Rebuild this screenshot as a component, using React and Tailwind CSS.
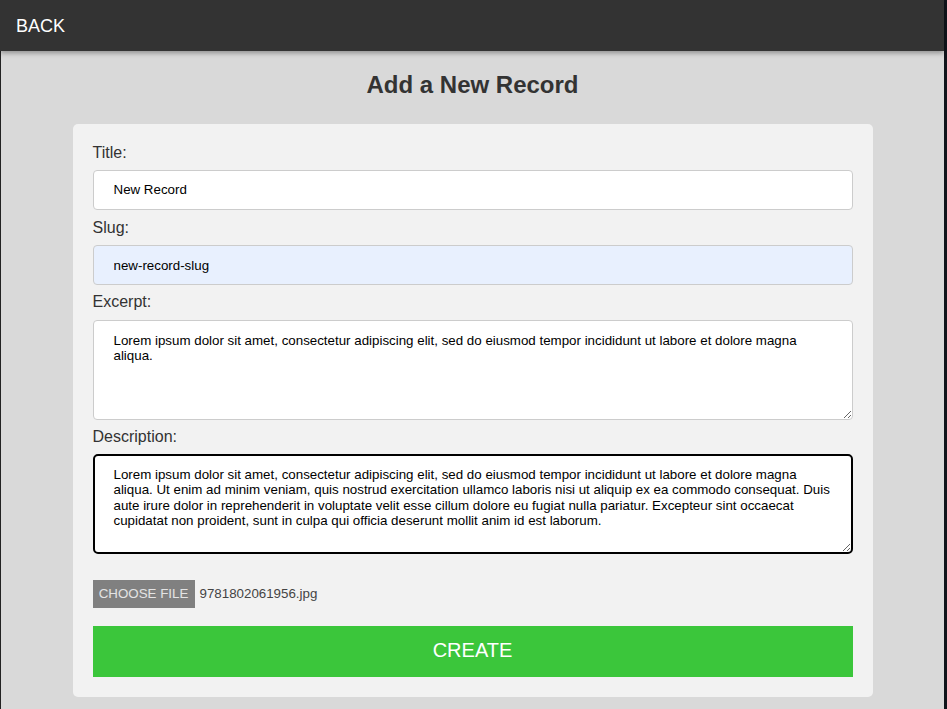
import React, { useState } from 'react';

const EXCERPT =
  'Lorem ipsum dolor sit amet, consectetur adipiscing elit, sed do eiusmod tempor incididunt ut labore et dolore magna aliqua.';

const DESCRIPTION =
  'Lorem ipsum dolor sit amet, consectetur adipiscing elit, sed do eiusmod tempor incididunt ut labore et dolore magna aliqua. Ut enim ad minim veniam, quis nostrud exercitation ullamco laboris nisi ut aliquip ex ea commodo consequat. Duis aute irure dolor in reprehenderit in voluptate velit esse cillum dolore eu fugiat nulla pariatur. Excepteur sint occaecat cupidatat non proident, sunt in culpa qui officia deserunt mollit anim id est laborum.';

const Label = ({ htmlFor, children, className = 'my-2' }) => (
  <label
    htmlFor={htmlFor}
    className={`block text-base leading-[1.15] text-[#333] ${className}`}
  >
    {children}
  </label>
);

export default function App() {
  const [title, setTitle] = useState('New Record');
  const [slug, setSlug] = useState('new-record-slug');
  const [excerpt, setExcerpt] = useState(EXCERPT);
  const [description, setDescription] = useState(DESCRIPTION);
  const [fileName, setFileName] = useState('9781802061956.jpg');

  return (
    <div className="flex min-h-screen bg-[#d9d9d9] font-['Liberation_Sans',Arial,sans-serif]">
      <div className="flex-1 flex flex-col">
        <header className="h-[51px] bg-[#333] flex items-center px-4 shadow-[0_2px_5px_rgba(0,0,0,0.35)] relative z-10">
          <button className="text-white text-lg leading-none">BACK</button>
        </header>

        <main className="flex-1 border-l border-[#222] pb-6">
          <h2 className="pt-5 mb-[25px] text-center text-2xl leading-[1.15] font-bold text-[#333]">
            Add a New Record
          </h2>

          <form
            className="w-[800px] mx-auto bg-[#f2f2f2] rounded-[5px] p-5 flex flex-col"
            onSubmit={(e) => e.preventDefault()}
          >
            <Label htmlFor="title" className="mb-2">Title:</Label>
            <input
              id="title"
              value={title}
              onChange={(e) => setTitle(e.target.value)}
              className="h-[40px] w-full bg-white border border-[#ccc] rounded-[4px] px-5 text-[13.333px] leading-[1.15] text-black outline-none"
            />

            <Label htmlFor="slug" className="mt-[9px] mb-2">Slug:</Label>
            <input
              id="slug"
              value={slug}
              onChange={(e) => setSlug(e.target.value)}
              className="h-[40px] w-full bg-[#e8f0fe] border border-[#ccc] rounded-[4px] px-5 text-[13.333px] leading-[1.15] text-black outline-none"
            />

            <Label htmlFor="excerpt">Excerpt:</Label>
            <textarea
              id="excerpt"
              value={excerpt}
              onChange={(e) => setExcerpt(e.target.value)}
              spellCheck
              className="block h-[100px] w-full bg-white border border-[#ccc] rounded-[4px] px-5 py-3 text-[13.333px] leading-[1.15] text-black outline-none resize-y"
            />

            <Label htmlFor="description">Description:</Label>
            <textarea
              id="description"
              value={description}
              onChange={(e) => setDescription(e.target.value)}
              spellCheck
              className="block h-[100px] w-full bg-white border-2 border-black rounded-[5px] px-[19px] py-[11px] text-[13.333px] leading-[1.15] text-black outline-none resize-y"
            />

            <div className="mt-[26px] flex items-center gap-[5px] h-[28px]">
              <label className="h-[28px] w-[102px] flex items-center justify-center bg-[#808080] text-[#e4e4e4] text-[13.333px] cursor-pointer">
                CHOOSE FILE
                <input
                  type="file"
                  className="hidden"
                  onChange={(e) => e.target.files[0] && setFileName(e.target.files[0].name)}
                />
              </label>
              <span className="text-[13.333px] text-[#444]">{fileName}</span>
            </div>

            <button
              type="submit"
              className="mt-[18px] h-[51px] w-full bg-[#3bc63b] text-white text-xl leading-none pb-[3px]"
            >
              CREATE
            </button>
          </form>
        </main>
      </div>
      <div className="w-[3px] bg-[#10141b]" />
    </div>
  );
}
